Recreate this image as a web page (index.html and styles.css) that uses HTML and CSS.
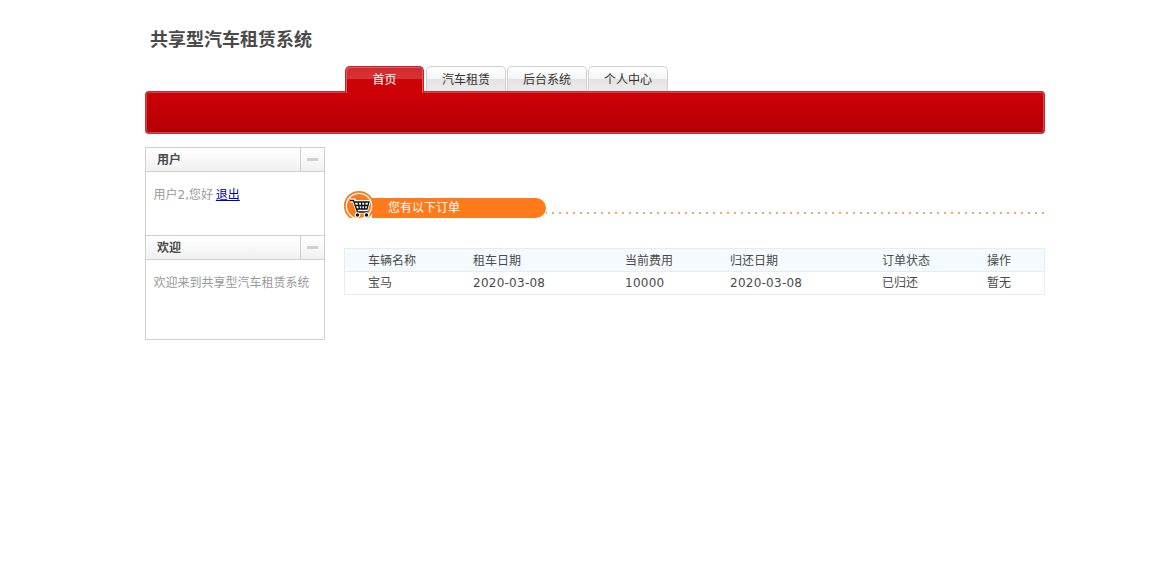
FILE: index.html
```html
<!DOCTYPE html>
<html lang="zh-CN">
<head>
    <meta charset="UTF-8">
    <title>共享型汽车租赁系统</title>
    <link rel="stylesheet" href="styles.css">
</head>
<body>
    <div class="wrap">
        <h1 class="logo">共享型汽车租赁系统</h1>
        <ul class="tabs">
            <li class="tab active">首页</li>
            <li class="tab">汽车租赁</li>
            <li class="tab">后台系统</li>
            <li class="tab">个人中心</li>
        </ul>
        <div class="banner"></div>
        <div class="content">
            <div class="sidebar">
                <div class="box-title"><span>用户</span><i class="toggle"></i></div>
                <div class="box-body user-box">用户2,您好 <a href="#">退出</a></div>
                <div class="box-title second"><span>欢迎</span><i class="toggle"></i></div>
                <div class="box-body">欢迎来到共享型汽车租赁系统</div>
            </div>
            <div class="main">
                <div class="order-head">
                    <svg class="cart" width="31" height="28" viewBox="0 0 31 28">
                        <circle cx="15" cy="16" r="14.200" fill="#fff" stroke="#f47b20" stroke-width="1.800"/>
                        <circle cx="15" cy="16" r="12" fill="#ff7a1a"/>
                        <path d="M6 10.500h4l4 11h10" fill="none" stroke="#fff" stroke-width="4"/>
                        <path d="M9 10h18l-3 11H13z" fill="#fff"/>
                        <path d="M6 10.500h3.500l4 11.500h10.500M10 12h15l-2 7H12.500M11 15.500h13M14 12l1.500 7M17.500 12l.5 7M21 12l-.5 7" fill="none" stroke="#111" stroke-width="1.300"/>
                        <circle cx="13.500" cy="25" r="2.800" fill="#fff"/>
                        <circle cx="22.500" cy="25" r="2.800" fill="#fff"/>
                        <circle cx="13.500" cy="25" r="1.700" fill="#111"/>
                        <circle cx="22.500" cy="25" r="1.700" fill="#111"/>
                    </svg>
                    <div class="order-title">您有以下订单</div>
                    <div class="dots"></div>
                </div>
                <table class="orders">
                    <tr class="head">
                        <td class="name">车辆名称</td>
                        <td class="date">租车日期</td>
                        <td class="cost">当前费用</td>
                        <td class="date">归还日期</td>
                        <td class="state">订单状态</td>
                        <td>操作</td>
                    </tr>
                    <tr>
                        <td>宝马</td>
                        <td class="num">2020-03-08</td>
                        <td class="num">10000</td>
                        <td class="num">2020-03-08</td>
                        <td>已归还</td>
                        <td>暂无</td>
                    </tr>
                </table>
            </div>
        </div>
    </div>
</body>
</html>
```

FILE: styles.css
```css
body {
    margin: 0;
    background: #fff;
    color: #4a4a4a;
    font: 12px/18px "DejaVu Sans", "Noto Sans CJK SC", sans-serif;
}
.wrap {
    width: 900px;
    margin-left: 145px;
}
.logo {
    margin: 0;
    padding: 27px 0 13px 5px;
    font-size: 18px;
    line-height: 26px;
    color: #4a4a4a;
}
.tabs {
    display: flex;
    gap: 1px;
    height: 25px;
    margin: 0;
    padding: 0 0 0 200px;
    list-style: none;
}
.tab {
    box-sizing: border-box;
    width: 80px;
    height: 25px;
    border: 1px solid #d0d0d0;
    border-bottom: 0;
    border-radius: 5px 5px 0 0;
    background: linear-gradient(#fff, #f5f5f5 48%, #e2e2e2 50%, #ececec);
    color: #333;
    line-height: 27px;
    text-align: center;
}
.tab.active {
    position: relative;
    width: 79px;
    height: 27px;
    margin-right: 1px;
    border-color: #c4222a;
    background: linear-gradient(#d3272b, #d93436 44%, #cc0508 48%, #cc0006);
    box-shadow: inset 1px 1px #dd5c5f, inset -1px 0 #dd5c5f;
    color: #fff;
}
.banner {
    box-sizing: border-box;
    height: 43px;
    border: 1px solid #c52f34;
    border-bottom-color: #b03a3e;
    border-radius: 4px;
    background: linear-gradient(#d00006, #b30005);
    box-shadow: inset 0 0 0 1px #d24448;
}
.content {
    display: flex;
    gap: 19px;
    margin-top: 13px;
}
.sidebar {
    box-sizing: border-box;
    width: 180px;
    height: 193px;
    border: 1px solid #d0d0d0;
}
.box-title {
    display: flex;
    box-sizing: border-box;
    height: 24px;
    padding-left: 11px;
    border-bottom: 1px solid #d0d0d0;
    background: linear-gradient(#fff, #f0f0f0);
    font-weight: bold;
    line-height: 24px;
}
.box-title.second {
    height: 25px;
    border-top: 1px solid #d0d0d0;
}
.box-title span {
    flex: 1;
}
.toggle {
    display: flex;
    align-items: center;
    justify-content: center;
    width: 23px;
    border-left: 1px solid #d0d0d0;
}
.toggle::before {
    content: "";
    width: 11px;
    height: 3px;
    background: #d0d0d0;
}
.box-body {
    padding: 14px 7px 0 7.5px;
    color: #999;
}
.user-box {
    height: 49px;
}
.box-body a {
    margin-left: -1px;
    color: #0000b8;
}
.main {
    width: 701px;
    padding-top: 43px;
}
.order-head {
    display: flex;
    height: 28px;
}
.cart {
    position: relative;
    z-index: 1;
}
.order-title {
    box-sizing: border-box;
    width: 174px;
    height: 20px;
    margin: 8px 0 0 -3px;
    padding-left: 16px;
    border-radius: 0 10px 10px 0;
    background: #ff7a1a;
    color: #fff;
    line-height: 20px;
}
.dots {
    flex: 1;
    height: 2px;
    margin: 22px 1px 0 0;
    background: repeating-linear-gradient(to left, #eda868 0 2px, transparent 2px 7px);
}
.orders {
    width: 701px;
    margin-top: 30px;
    border: 1px solid #e5ecf2;
    border-collapse: collapse;
    table-layout: fixed;
}
.orders td {
    height: 21px;
    padding: 1px 0 0 23px;
    border-bottom: 1px solid #e5ecf2;
    line-height: 21px;
}
.orders .head td {
    height: 20px;
    padding-top: 2px;
    line-height: 20px;
}
.head {
    background: #f5fafe;
}
.orders .name,
.orders .cost,
.orders .state {
    width: 82px;
}
.orders .date {
    width: 129px;
}
.orders .num {
    letter-spacing: 0.25px;
}
```
